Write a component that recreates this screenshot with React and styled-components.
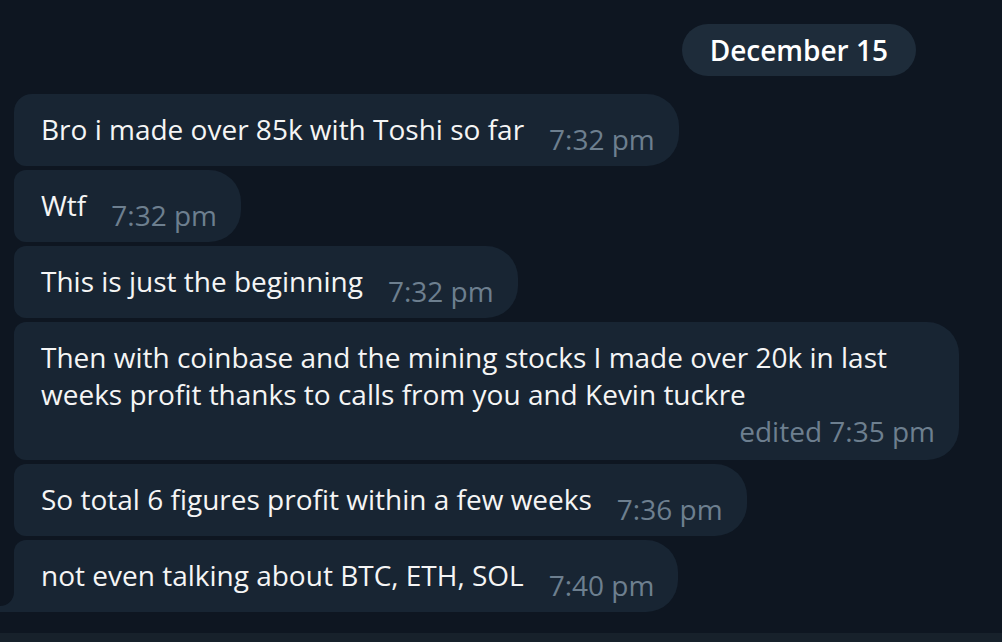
import React from "react";
import styled, { createGlobalStyle } from "styled-components";

const Global = createGlobalStyle`
  html, body { margin: 0; padding: 0; background: #0e1621; }
  body { font-family: "Open Sans", "Noto Sans", sans-serif; }
  * { box-sizing: border-box; }
`;

const Page = styled.div`
  width: 1002px;
  height: 642px;
  overflow: hidden;
  background: #0e1621;
  display: flex;
  flex-direction: column;
  padding-top: 24px;
`;

const DateRow = styled.div`
  display: flex;
  justify-content: flex-end;
  padding-right: 86px;
  margin-bottom: 18px;
`;

const DatePill = styled.div`
  height: 52px;
  padding: 0 28px;
  border-radius: 26px;
  background: #1e2c3a;
  color: #ffffff;
  font-size: 28px;
  font-weight: 600;
  line-height: 52px;
  white-space: nowrap;
`;

const Messages = styled.div`
  display: flex;
  flex-direction: column;
  align-items: flex-start;
  gap: 4px;
  padding-left: 14px;
  flex: 1;
`;

const Bubble = styled.div`
  position: relative;
  max-width: 945px;
  background: #182533;
  color: #f5f5f5;
  font-size: 28px;
  line-height: 37px;
  padding: 17px 24px ${(p) => (p.$stacked ? "10px" : "8px")} 27px;
  border-radius: ${(p) => (p.$first ? "18px" : "12px")} 32px 32px
    ${(p) => (p.$last ? "0" : "12px")};
  display: ${(p) => (p.$stacked ? "block" : "flex")};
  align-items: flex-start;
`;

const Text = styled.span`
  white-space: ${(p) => (p.$stacked ? "normal" : "nowrap")};
  display: block;
`;

const Time = styled.span`
  display: block;
  color: #6d7f8f;
  font-size: 28px;
  line-height: 37px;
  white-space: nowrap;
  margin-left: 25px;
  margin-top: ${(p) => (p.$stacked ? "0" : "10px")};
  text-align: right;
`;

const Tail = styled.svg`
  position: absolute;
  left: -14px;
  bottom: 0;
  width: 14px;
  height: 24px;
  display: block;
`;

const Footer = styled.div`
  height: 9px;
  background: #17212b;
  margin-top: auto;
`;

const messages = [
  { text: "Bro i made over 85k with Toshi so far", time: "7:32 pm" },
  { text: "Wtf", time: "7:32 pm" },
  { text: "This is just the beginning", time: "7:32 pm" },
  {
    text:
      "Then with coinbase and the mining stocks I made over 20k in last weeks profit thanks to calls from you and Kevin tuckre",
    time: "edited 7:35 pm",
    stacked: true,
  },
  { text: "So total 6 figures profit within a few weeks", time: "7:36 pm" },
  { text: "not even talking about BTC, ETH, SOL", time: "7:40 pm" },
];

export default function App() {
  return (
    <>
      <Global />
      <Page>
        <DateRow>
          <DatePill>December 15</DatePill>
        </DateRow>
        <Messages>
          {messages.map((m, i) => {
            const first = i === 0;
            const last = i === messages.length - 1;
            return (
              <Bubble key={i} $first={first} $last={last} $stacked={m.stacked}>
                <Text $stacked={m.stacked}>{m.text}</Text>
                <Time $stacked={m.stacked}>{m.time}</Time>
                {last && (
                  <Tail viewBox="0 0 14 24">
                    <path d="M14 0 L14 24 L0 24 L0 18 A14 14 0 0 0 14 4 Z" fill="#182533" />
                  </Tail>
                )}
              </Bubble>
            );
          })}
        </Messages>
        <Footer />
      </Page>
    </>
  );
}
